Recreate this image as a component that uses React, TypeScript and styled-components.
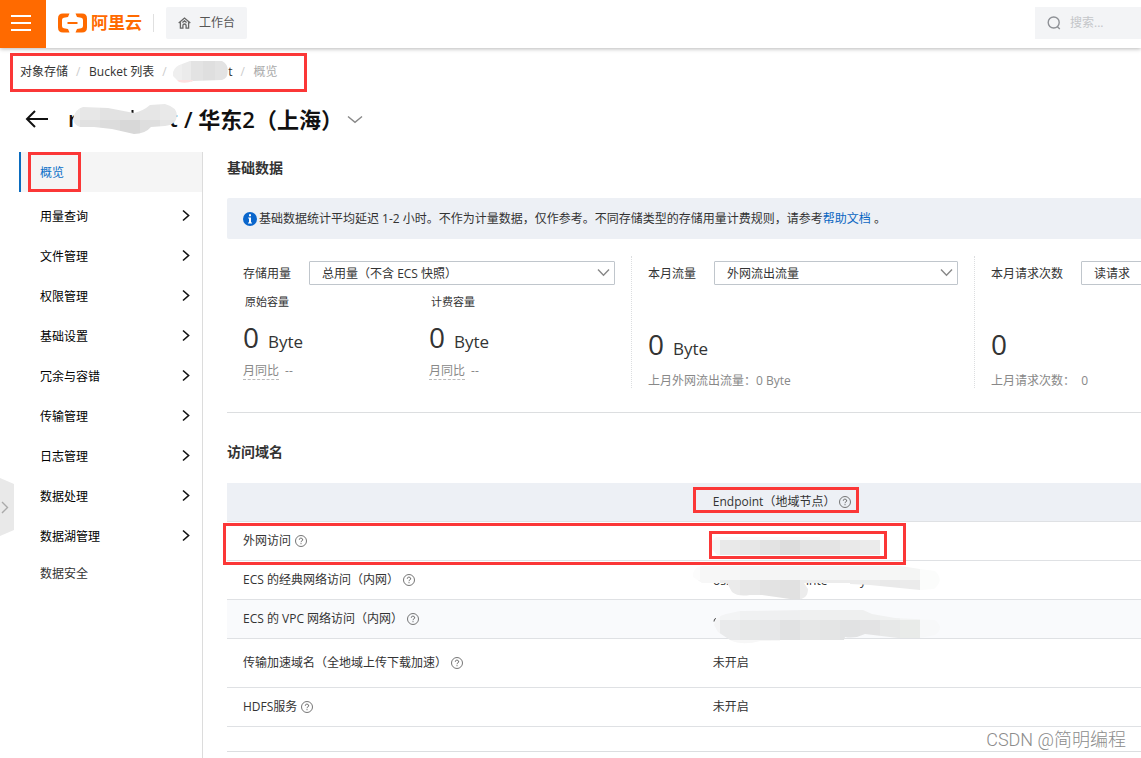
import React from 'react';
import styled, { createGlobalStyle } from 'styled-components';

const GlobalStyle = createGlobalStyle`
  *, *::before, *::after { box-sizing: border-box; }
  body {
    margin: 0;
    background: #fff;
    color: #333;
    font: 12px/16px "Open Sans", "Noto Sans CJK SC", sans-serif;
  }
  button, input, select { font: inherit; color: inherit; }
  h1, h2, p { margin: 0; }
  a { color: inherit; text-decoration: none; }
`;

const Page = styled.div`
  position: relative;
  min-height: 100vh;
  display: flex;
  flex-direction: column;
  overflow: hidden;
`;

const Header = styled.header`
  display: flex;
  align-items: center;
  height: 48px;
  box-shadow: 0 1px 4px rgba(0, 0, 0, 0.28);
`;

const MenuButton = styled.button`
  display: flex;
  flex-direction: column;
  align-items: center;
  justify-content: center;
  gap: 5px;
  width: 46px;
  height: 48px;
  padding: 0 4px 2px 0;
  border: 0;
  background: #ff6a00;
`;

const MenuBar = styled.span`
  width: 20px;
  height: 2px;
  background: #fff;
`;

const Logo = styled.a`
  display: flex;
  align-items: center;
  gap: 4px;
  margin-left: 12px;
  padding-bottom: 2px;
  color: #ff6a00;
  font-size: 17px;
  line-height: 20px;
  font-weight: 700;
`;

const HeaderRule = styled.span`
  width: 1px;
  height: 18px;
  margin: 0 12px 2px 11px;
  background: #e0e0e0;
`;

const Workbench = styled.button`
  display: flex;
  align-items: center;
  gap: 8px;
  height: 32px;
  margin-bottom: 2px;
  padding: 0 12px;
  border: 0;
  border-radius: 2px;
  background: #f3f4f6;
  color: #555;
`;

const Search = styled.label`
  display: flex;
  align-items: center;
  gap: 9px;
  width: 106px;
  height: 32px;
  margin: 0 0 2px auto;
  padding-left: 12px;
  background: #f3f4f6;
`;

const SearchInput = styled.input`
  flex: 1;
  min-width: 0;
  padding: 0;
  border: 0;
  background: none;
  outline: 0;
  &::placeholder { color: #c4c6c9; opacity: 1; }
`;

const Breadcrumb = styled.nav`
  display: flex;
  align-items: center;
  gap: 8px;
  width: fit-content;
  height: 39px;
  margin: 5px 10px 0;
  padding: 0 26px 2px 7px;
  border: 3px solid #fb3737;
`;

const Slash = styled.span`
  width: 5px;
  color: #ccc;
`;

const Masked = styled.a`
  display: flex;
  align-items: center;
  margin-left: -2px;
`;

const Current = styled.span`
  color: #aaa;
`;

const TitleRow = styled.div`
  display: flex;
  align-items: center;
  height: 54px;
  margin-bottom: 6px;
  padding-left: 25px;
`;

const IconButton = styled.button`
  display: flex;
  padding: 0;
  border: 0;
  background: none;
`;

const Title = styled.h1`
  display: flex;
  align-items: center;
  margin: 0 4px 0 20px;
  color: #111;
  font-size: 22px;
  line-height: 32px;
  font-weight: 600;
  white-space: pre;
`;

const TitleMask = styled.svg`
  width: 106px;
  height: 32px;
  margin: 0 6px 0 4px;
  overflow: visible;
`;

const Body = styled.div`
  display: flex;
  flex: 1;
`;

const Sidebar = styled.aside`
  flex: none;
  width: 184px;
  margin-left: 19px;
  border-right: 1px solid #dcdcdc;
`;

const NavActive = styled.a`
  display: flex;
  height: 40px;
  margin-bottom: 4px;
  padding-left: 7px;
  border-left: 2px solid #0a6cbf;
  background: #f5f5f5;
  color: #0a70c8;
`;

const NavMark = styled.span`
  display: flex;
  align-items: center;
  padding: 2px 14px 0 9px;
  border: 3px solid #fb3737;
`;

const NavItem = styled.a`
  display: flex;
  align-items: center;
  justify-content: space-between;
  height: 40px;
  padding: 2px 11px 0 21px;
  color: #000;
`;

const NavLast = styled(NavItem)`
  height: 33px;
  color: #333;
`;

const Main = styled.main`
  flex: 1;
  min-width: 0;
  padding-left: 24px;
`;

const Heading = styled.h2`
  font-size: 14px;
  line-height: 32px;
  font-weight: 600;
`;

const Notice = styled.p`
  display: flex;
  align-items: center;
  height: 41px;
  margin-top: 14px;
  padding: 0 16px;
  border-radius: 2px 0 0 2px;
  background: #edf0f5;
  white-space: nowrap;
  a { color: #0a66c2; }
  svg { flex: none; margin-right: 2px; }
`;

const Stats = styled.section`
  display: grid;
  grid-template-columns: minmax(0, 404fr) minmax(0, 343fr) minmax(0, 167fr);
  padding: 17px 0 24px;
  border-bottom: 1px solid #dcdee0;
`;

const Stat = styled.div`
  min-width: 0;
  height: 132px;
  padding: 5px 16px 0;
  & + & { border-left: 1px dotted #dcdee0; }
`;

const Field = styled.label`
  display: flex;
  align-items: center;
  gap: 18px;
  white-space: nowrap;
`;

const FieldName = styled.span`
  padding-top: 2px;
`;

const SelectWrap = styled.span`
  display: grid;
  flex: 1;
  min-width: 120px;
  align-items: center;
  svg { grid-area: 1 / 1; justify-self: end; margin: 0 5px 2px 0; pointer-events: none; }
`;

const Select = styled.select`
  grid-area: 1 / 1;
  width: 100%;
  height: 24px;
  padding: 2px 24px 0 12px;
  border: 1px solid #c0c6cc;
  border-radius: 1px;
  background: #fff;
  appearance: none;
`;

const Split = styled.div`
  display: grid;
  grid-template-columns: 1fr 1fr;
`;

const Caption = styled.p`
  padding: 9px 2px 0;
  font-size: 11px;
`;

const Amount = styled.p<{ $top: number }>`
  display: flex;
  align-items: baseline;
  gap: 9px;
  margin-top: ${(p) => p.$top}px;
  font-size: 28px;
  line-height: 36px;
`;

const Unit = styled.span`
  font-size: 17px;
  line-height: 20px;
`;

const Compare = styled.p`
  display: flex;
  gap: 6px;
  margin-top: 8px;
  color: #888;
  span:first-child { border-bottom: 1px dashed #bbb; }
`;

const Previous = styled.p`
  margin-top: 11px;
  color: #888;
  white-space: pre;
`;

const Domains = styled.section`
  padding: 23px 0 24px;
  border-bottom: 1px solid #dcdee0;
`;

const Table = styled.table`
  width: 100%;
  margin-top: 15px;
  border-spacing: 0;
  table-layout: fixed;
`;

const Row = styled.tr<{ $tall?: boolean; $tint?: boolean }>`
  position: relative;
  height: ${(p) => (p.$tall ? 49 : 39)}px;
  background: ${(p) => (p.$tint ? '#f9fafc' : 'transparent')};
`;

const HeadCell = styled.th`
  position: relative;
  height: 39px;
  padding: 0 16px;
  border-bottom: 1px solid #dfe1e4;
  background: #edf0f5;
  font-weight: 400;
  text-align: left;
  &:first-child { width: 51.4%; }
`;

const Cell = styled.td`
  position: relative;
  padding: 0 16px;
  border-bottom: 1px solid #dfe1e4;
`;

const Label = styled.span`
  display: flex;
  align-items: center;
  gap: 4px;
`;

const Mark = styled.span<{ $x: number; $y: number; $w: number; $h: number }>`
  position: absolute;
  z-index: 1;
  left: ${(p) => p.$x}px;
  top: ${(p) => p.$y}px;
  width: ${(p) => p.$w}px;
  height: ${(p) => p.$h}px;
  border: 3px solid #fb3737;
  pointer-events: none;
`;

const CellMask = styled.svg`
  position: absolute;
  z-index: 1;
  left: -7px;
  top: 0;
  width: 254px;
  height: 48px;
  font-size: 12px;
`;

const Handle = styled.button`
  position: absolute;
  left: 0;
  top: 478px;
  display: flex;
  padding: 0;
  border: 0;
  background: none;
`;

const Watermark = styled.span`
  position: absolute;
  right: 15px;
  bottom: 6px;
  color: #8c8c8c;
  font: 18px/24px Roboto, "Noto Sans CJK SC", sans-serif;
  font-weight: 300;
`;

const LogoMark = () => (
  <svg width="29" height="20" viewBox="0 0 29 20" fill="#ff6a00" aria-hidden="true">
    <path d="M5 .5H11.500L10 4 5.800 4.800Q4 5.200 4 7V13Q4 14.800 5.800 15.200L10 16 11.500 19.500H5Q0 19.500 0 14.500V5.500Q0 .5 5 .5z" />
    <path d="M24 .5H17.500L19 4 23.200 4.800Q25 5.200 25 7V13Q25 14.800 23.200 15.200L19 16 17.500 19.500H24Q29 19.500 29 14.500V5.500Q29 .5 24 .5z" />
    <path d="M9.500 9h10v2h-10z" />
  </svg>
);

const HomeIcon = () => (
  <svg width="13" height="12" viewBox="0 0 13 12" fill="none" stroke="#666" strokeWidth="1.3" aria-hidden="true">
    <path d="M.7 6 6.5 1l5.8 5M2.4 5.2v6h2.5V8.6a1.6 1.6 0 0 1 3.2 0v2.6h2.5v-6M4.400 5.600 6.500 3.900l2.100 1.700" />
  </svg>
);

const SearchIcon = () => (
  <svg width="14" height="14" viewBox="0 0 14 14" fill="none" stroke="#8e9196" strokeWidth="1.4" aria-hidden="true">
    <circle cx="6.7" cy="6.5" r="5.5" />
    <path d="m10.4 10.8 2.4 2.2" />
  </svg>
);

const Chevron = ({ w = 13, color = '#888' }: { w?: number; color?: string }) => (
  <svg width={w} height="9" viewBox={`0 0 ${w} 9`} fill="none" stroke={color} strokeWidth="1.4" aria-hidden="true">
    <path d={`M1 1.5 ${w / 2} 7.3 ${w - 1} 1.5`} />
  </svg>
);

const NavArrow = () => (
  <svg width="10" height="16" viewBox="0 0 10 16" fill="none" stroke="#111" strokeWidth="1.6" aria-hidden="true">
    <path d="m2 1.500 5.600 5L2 11.500" />
  </svg>
);

const InfoIcon = () => (
  <svg width="14" height="14" viewBox="0 0 14 14" aria-hidden="true">
    <circle cx="7" cy="7" r="7" fill="#0a66cc" />
    <path d="M6 2.2h2v2H6zM5.2 5.6H8v5h1v1H5v-1h1V6.600h-.8z" fill="#fff" />
  </svg>
);

const HelpIcon = () => (
  <svg width="12" height="12" viewBox="0 0 12 12" fill="none" stroke="#666" aria-hidden="true">
    <circle cx="6" cy="6" r="5.5" strokeWidth=".9" />
    <path d="M4.300 4.700a1.700 1.500 0 1 1 2.600 1.200Q6 6.400 6 7.200M6 8.200v1" />
  </svg>
);

type Block = [x: number, y: number, w: number, h: number, fill: string];

const blocks = (x: number, y: number, h: number, w: number, fills: string[]): Block[] =>
  fills.map((fill, i) => [x + i * w, y, w, h, fill]);

const Mosaic = ({ id, outline, tiles }: { id: string; outline: string; tiles: Block[] }) => (
  <>
    <clipPath id={id}><path d={outline} /></clipPath>
    <g clipPath={`url(#${id})`} shapeRendering="crispEdges">
      {tiles.map(([x, y, w, h, fill], i) => (
        <rect key={i} x={x} y={y} width={w} height={h} fill={fill} />
      ))}
    </g>
  </>
);

const navItems = ['用量查询', '文件管理', '权限管理', '基础设置', '冗余与容错', '传输管理', '日志管理', '数据处理', '数据湖管理'];

const Picker = ({ label, value }: { label: string; value: string }) => (
  <Field>
    <FieldName>{label}</FieldName>
    <SelectWrap>
      <Select defaultValue={value}>
        <option>{value}</option>
      </Select>
      <Chevron />
    </SelectWrap>
  </Field>
);

const Capacity = ({ name }: { name: string }) => (
  <div>
    <Caption>{name}</Caption>
    <Amount $top={9}>0<Unit>Byte</Unit></Amount>
    <Compare><span>月同比</span><span>--</span></Compare>
  </div>
);

export default function App() {
  return (
    <Page>
      <GlobalStyle />
      <Header>
        <MenuButton aria-label="菜单"><MenuBar /><MenuBar /><MenuBar /></MenuButton>
        <Logo href="#"><LogoMark />阿里云</Logo>
        <HeaderRule />
        <Workbench><HomeIcon />工作台</Workbench>
        <Search>
          <SearchIcon />
          <SearchInput placeholder="搜索..." aria-label="搜索" />
        </Search>
      </Header>

      <Breadcrumb>
        <a href="#">对象存储</a>
        <Slash>/</Slash>
        <a href="#">Bucket 列表</a>
        <Slash>/</Slash>
        <Masked href="#">
          <svg width="55" height="24" viewBox="0 0 55 24" aria-hidden="true">
            <Mosaic
              id="crumb"
              outline="M0 12Q2 6 9 4L17 1H49Q55 4 55 11 55 18 49 20L20 21Q13 24 6 22L0 16z"
              tiles={[...blocks(0, 0, 20, 9, ['#efefef', '#ebebeb']), ...blocks(18, 0, 24, 12, ['#e3e3e3', '#dfdfdf', '#e3e3e3', '#ececec']), [0, 20, 20, 4, '#fde0e0']]}
            />
          </svg>
          t
        </Masked>
        <Slash>/</Slash>
        <Current>概览</Current>
      </Breadcrumb>

      <TitleRow>
        <IconButton aria-label="返回">
          <svg width="23" height="18" viewBox="0 0 23 18" fill="none" stroke="#111" strokeWidth="2" aria-hidden="true">
            <path d="M10 1 2 9l8 8M2 9h21" />
          </svg>
        </IconButton>
        <Title>
          <TitleMask viewBox="72 103 106 32" aria-hidden="true">
            <text x="68" y="127" fontSize="22" fill="#111">r</text>
            <path d="M132.500 110v8" stroke="#111" strokeWidth="2" />
            <text x="169" y="127" fontSize="22" fill="#111">t</text>
            <Mosaic
              id="title"
              outline="M73 119Q75 109 83 107L108 108 134 113Q143 111 150 105L165 104Q177 107 177 116 176 125 165 126L151 127Q145 134 134 134L112 129 94 127H80Q74 125 73 119z"
              tiles={[
                ...blocks(60, 100, 20, 20, ['#ededed', '#e7e7e7', '#e2e2e2', '#e3e3e3', '#e6e6e6', '#e9e9e9']),
                ...blocks(60, 120, 20, 20, ['#e9e9e9', '#e1e1e1', '#dcdcdc', '#d8d8d8', '#dedede', '#e5e5e5']),
              ]}
            />
          </TitleMask>
          / 华东2（上海）
        </Title>
        <IconButton aria-label="切换 Bucket"><Chevron w={16} /></IconButton>
      </TitleRow>

      <Body>
        <Sidebar>
          <nav>
            <NavActive href="#"><NavMark>概览</NavMark></NavActive>
            {navItems.map((name) => (
              <NavItem href="#" key={name}>{name}<NavArrow /></NavItem>
            ))}
            <NavLast href="#">数据安全</NavLast>
          </nav>
        </Sidebar>

        <Main>
          <Heading>基础数据</Heading>
          <Notice>
            <InfoIcon />
            <span>
              基础数据统计平均延迟 1-2 小时。不作为计量数据，仅作参考。不同存储类型的存储用量计费规则，请参考
              <a href="#">帮助文档</a> 。
            </span>
          </Notice>

          <Stats>
            <Stat>
              <Picker label="存储用量" value="总用量（不含 ECS 快照）" />
              <Split>
                <Capacity name="原始容量" />
                <Capacity name="计费容量" />
              </Split>
            </Stat>
            <Stat>
              <Picker label="本月流量" value="外网流出流量" />
              <Amount $top={41}>0<Unit>Byte</Unit></Amount>
              <Previous>上月外网流出流量：0 Byte</Previous>
            </Stat>
            <Stat>
              <Picker label="本月请求次数" value="读请求" />
              <Amount $top={41}>0</Amount>
              <Previous>上月请求次数：  0</Previous>
            </Stat>
          </Stats>

          <Domains>
            <Heading>访问域名</Heading>
            <Table>
              <thead>
                <tr>
                  <HeadCell />
                  <HeadCell>
                    <Label>Endpoint（地域节点） <HelpIcon /></Label>
                    <Mark $x={-4} $y={4} $w={166} $h={26} />
                  </HeadCell>
                </tr>
              </thead>
              <tbody>
                <Row>
                  <Cell>
                    <Label>外网访问 <HelpIcon /></Label>
                    <Mark $x={-4} $y={1} $w={683} $h={42} />
                  </Cell>
                  <Cell>
                    <CellMask viewBox="690 522 254 48" aria-hidden="true">
                      <Mosaic
                        id="public"
                        outline="M716 537H820V540H880V555H717L712 549V541z"
                        tiles={[[712, 536, 108, 4, '#fafafa'], [712, 540, 8, 15, '#f5f5f5'], ...blocks(720, 540, 15, 20, ['#e9e9e9', '#e7e7e7', '#e3e3e3', '#dddddd', '#e4e4e4', '#e4e4e4', '#e9e9e9', '#ebebeb'])]}
                      />
                    </CellMask>
                    <Mark $x={12} $y={9} $w={178} $h={28} />
                  </Cell>
                </Row>
                <Row>
                  <Cell><Label>ECS 的经典网络访问（内网） <HelpIcon /></Label></Cell>
                  <Cell>
                    <CellMask viewBox="690 561 254 48" aria-hidden="true">
                      <text x="713" y="585" fill="#333">os.</text>
                      <text x="806" y="585" fill="#333">inte</text>
                      <text x="860" y="585" fill="#333">y</text>
                      <Mosaic
                        id="classic"
                        outline="M693 574Q695 566 703 566H900L920 569 935 571Q945 580 934 589L920 590 870 585 850 584V583H727L732 592Q738 597 750 595H762L790 599Q808 602 808 589L804 583H702L693 577z"
                        tiles={[
                          ...blocks(680, 561, 19, 20, ['#fcfcfc', '#f7f7f7', '#f7f7f7', '#f4f5f5', '#f5f5f5', '#f4f5f5', '#f5f6f6', '#f4f5f5', '#f4f4f4', '#f5f6f6', '#f6f7f6', '#f4f5f4', '#fbfcfb']),
                          [680, 580, 40, 3, '#f7f7f7'],
                          [920, 580, 20, 10, '#fbfcfb'],
                          ...blocks(720, 580, 23, 20, ['#ebebeb', '#e7e7e7', '#e3e3e3', '#e1e1e1', '#ececec', '#ececec', '#ececec', '#ececec', '#e9e9e9', '#ebebeb']),
                        ]}
                      />
                    </CellMask>
                  </Cell>
                </Row>
                <Row $tint>
                  <Cell><Label>ECS 的 VPC 网络访问（内网） <HelpIcon /></Label></Cell>
                  <Cell>
                    <CellMask viewBox="690 600 254 48" aria-hidden="true">
                      <path d="M714 621.500q0-3 2-3" stroke="#444" fill="none" />
                      <Mosaic
                        id="vpc"
                        outline="M714 625Q716 616 726 614L740 611 805 610H863L872 614 895 618 935 620Q945 628 935 635L920 638H898L865 634Q855 639 845 637L844 640 760 641Q742 646 730 640L718 632z"
                        tiles={[
                          ...blocks(700, 600, 20, 20, ['#f7f7f8', '#f3f4f5', '#f0f1f2', '#eff0f1', '#eeeff0', '#eff0f0', '#eeefef', '#eeefef', '#eff0f0', '#f0f1f1', '#f3f4f4', '#f8f9fa']),
                          ...blocks(700, 620, 20, 20, ['#f4f4f5', '#e9eaeb', '#e7e8e8', '#e6e7e8', '#e1e2e3', '#e6e7e7', '#e4e5e5', '#e1e2e3', '#e3e3e4', '#e7e8e8', '#e9ebe9', '#f7f8f9']),
                          [720, 640, 60, 6, '#f7f7f7'],
                        ]}
                      />
                    </CellMask>
                  </Cell>
                </Row>
                <Row $tall>
                  <Cell><Label>传输加速域名（全地域上传下载加速） <HelpIcon /></Label></Cell>
                  <Cell>未开启</Cell>
                </Row>
                <Row>
                  <Cell><Label>HDFS服务 <HelpIcon /></Label></Cell>
                  <Cell>未开启</Cell>
                </Row>
              </tbody>
            </Table>
          </Domains>
        </Main>
      </Body>

      <Handle aria-label="展开">
        <svg width="14" height="58" viewBox="0 0 14 58" fill="none" aria-hidden="true">
          <path d="M0 0 14 6V52L0 58z" fill="#e9e9e9" />
          <path d="m2 24 5.500 5.500L2 35" stroke="#aaa" strokeWidth="1.400" />
        </svg>
      </Handle>
      <Watermark>CSDN @简明编程</Watermark>
    </Page>
  );
}
